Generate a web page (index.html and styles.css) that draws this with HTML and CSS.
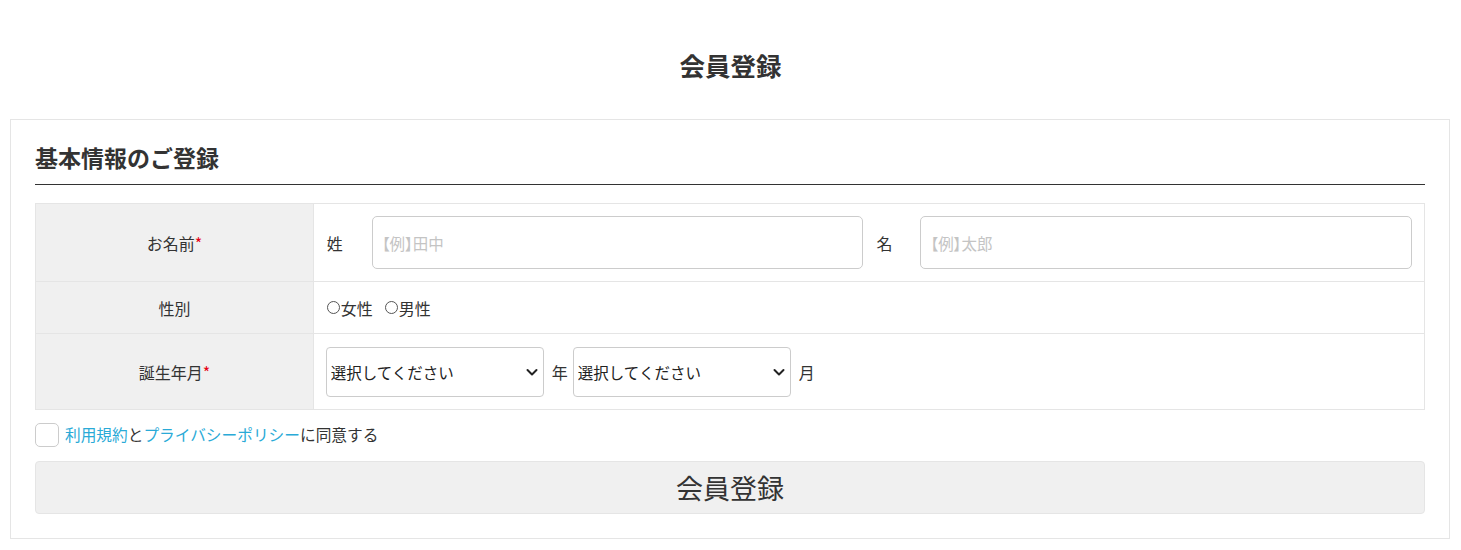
FILE: index.html
```html
<!DOCTYPE html>
<html lang="ja">
<head>
<meta charset="utf-8">
<title>会員登録</title>
<link rel="stylesheet" href="styles.css">
</head>
<body>
<h1 class="page-title">会員登録</h1>
<div class="card">
  <h2 class="section-title">基本情報のご登録</h2>
  <table class="form-table">
    <tr class="row-name">
      <th>お名前<span class="req">*</span></th>
      <td>
        <div class="name-fields">
          <span class="name-label">姓</span>
          <input class="text-input" type="text" placeholder="【例】田中">
          <span class="name-label name-label-2">名</span>
          <input class="text-input" type="text" placeholder="【例】太郎">
        </div>
      </td>
    </tr>
    <tr class="row-gender">
      <th>性別</th>
      <td>
        <div class="radios">
          <label class="radio"><span class="circle"></span>女性</label>
          <label class="radio"><span class="circle"></span>男性</label>
        </div>
      </td>
    </tr>
    <tr class="row-birth">
      <th>誕生年月<span class="req">*</span></th>
      <td>
        <div class="birth-fields">
          <div class="select-wrap">
            <select class="select"><option>選択してください</option></select>
            <svg class="chev" width="14" height="14" viewBox="0 0 14 14"><path d="M2.5 5 L7 9.5 L11.5 5" fill="none" stroke="#222" stroke-width="2" stroke-linecap="round" stroke-linejoin="round"/></svg>
          </div>
          <span class="unit">年</span>
          <div class="select-wrap">
            <select class="select"><option>選択してください</option></select>
            <svg class="chev" width="14" height="14" viewBox="0 0 14 14"><path d="M2.5 5 L7 9.5 L11.5 5" fill="none" stroke="#222" stroke-width="2" stroke-linecap="round" stroke-linejoin="round"/></svg>
          </div>
          <span class="unit">月</span>
        </div>
      </td>
    </tr>
  </table>
  <label class="agree">
    <span class="checkbox"></span>
    <span class="agree-text"><a href="#" class="link">利用規約</a>と<a href="#" class="link">プライバシーポリシー</a>に同意する</span>
  </label>
  <button class="submit" type="button">会員登録</button>
</div>
</body>
</html>
```

FILE: styles.css
```css
* { box-sizing: border-box; }
html, body {
  margin: 0;
  padding: 0;
  background: #fff;
}
body {
  font-family: "Noto Sans CJK JP", "Noto Sans", sans-serif;
  color: #333;
  font-size: 16px;
}
.page-title {
  margin: 0;
  padding: 48px 0 37px;
  line-height: 34px;
  font-size: 25.5px;
  font-weight: bold;
  text-align: center;
  color: #333;
}
.card {
  margin: 0 11px 0 10px;
  border: 1px solid #e5e5e5;
  padding: 24px 24px 24px 24px;
}
.section-title {
  margin: 0 0 18px;
  padding-bottom: 13px;
  font-size: 23px;
  line-height: 27px;
  font-weight: bold;
  border-bottom: 1px solid #333;
  color: #333;
}
.form-table {
  width: 100%;
  border-collapse: collapse;
  border: 1px solid #e5e5e5;
}
.form-table th,
.form-table td {
  border: 1px solid #e5e5e5;
  font-size: 16px;
  line-height: 22px;
}
.form-table th {
  width: 20%;
  background: #f0f0f0;
  font-weight: normal;
  text-align: center;
  color: #333;
}
.form-table td {
  padding: 0 12px 0 12px;
}
.row-name { height: 78px; }
.row-gender { height: 52px; }
.row-birth { height: 76px; }
.req { color: #e60012; }
.name-fields {
  display: flex;
  align-items: center;
}
.name-label {
  flex: none;
  width: 16px;
  margin-left: 1px;
  margin-right: 29px;
}
.name-label-2 {
  margin-left: 13px;
  margin-right: 28px;
}
.text-input {
  flex: 1;
  min-width: 0;
  height: 53px;
  border: 1px solid #ccc;
  border-radius: 5px;
  padding: 0 9px;
  font-family: inherit;
  font-size: 15.5px;
  font-feature-settings: "palt";
  color: #333;
  outline: none;
}
.text-input::placeholder { color: #c4c4c4; }
.radios {
  display: flex;
  gap: 12px;
  padding-left: 1px;
}
.radio {
  display: flex;
  align-items: center;
}
.circle {
  width: 13px;
  height: 13px;
  border: 1px solid #555;
  border-radius: 50%;
  margin-right: 1px;
}
.birth-fields {
  display: flex;
  align-items: center;
}
.select-wrap {
  position: relative;
  width: 218px;
  height: 50px;
}
.select {
  appearance: none;
  -webkit-appearance: none;
  width: 100%;
  height: 100%;
  border: 1px solid #ccc;
  border-radius: 4px;
  background: #fff;
  padding: 0 24px 0 4px;
  font-family: inherit;
  font-size: 15.5px;
  color: #222;
  outline: none;
}
.chev {
  position: absolute;
  right: 5px;
  top: 18px;
  pointer-events: none;
}
.unit {
  margin: 0 5px 0 8px;
}
.agree {
  display: flex;
  align-items: center;
  margin-top: 13px;
}
.checkbox {
  width: 24px;
  height: 24px;
  border: 1px solid #ccc;
  border-radius: 5px;
  margin-right: 6px;
  background: #fff;
}
.agree-text {
  font-size: 15.7px;
  line-height: 22px;
}
.link {
  color: #2aaad7;
  text-decoration: none;
}
.submit {
  display: block;
  width: 100%;
  height: 53px;
  margin-top: 14px;
  border: 1px solid #e5e5e5;
  border-radius: 4px;
  background: #f0f0f0;
  font-family: inherit;
  font-size: 27px;
  color: #333;
  padding: 0;
}
```
